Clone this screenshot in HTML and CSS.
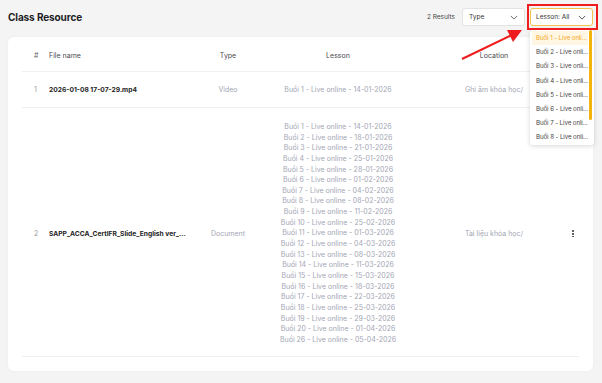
FILE: index.html
```html
<!DOCTYPE html>
<html>
<head>
<meta charset="utf-8">
<link rel="stylesheet" href="styles.css">
</head>
<body>
<div class="page">
  <div class="topbar">
    <h1 class="title">Class Resource</h1>
    <div class="controls">
      <span class="results">2 Results</span>
      <div class="select">
        <span>Type</span>
        <svg class="chev" viewBox="0 0 10 6" width="8" height="5"><path d="M1 1l4 4 4-4" fill="none" stroke="#666" stroke-width="1.2"/></svg>
      </div>
      <div class="select select-active">
        <span>Lesson: All</span>
        <svg class="chev" viewBox="0 0 10 6" width="8" height="5"><path d="M1 1l4 4 4-4" fill="none" stroke="#555" stroke-width="1.2"/></svg>
        <div class="menu">
          <div class="menu-item active">Buổi 1 - Live onli...</div>
          <div class="menu-item">Buổi 2 - Live onli...</div>
          <div class="menu-item">Buổi 3 - Live onli...</div>
          <div class="menu-item">Buổi 4 - Live onli...</div>
          <div class="menu-item">Buổi 5 - Live onli...</div>
          <div class="menu-item">Buổi 6 - Live onli...</div>
          <div class="menu-item">Buổi 7 - Live onli...</div>
          <div class="menu-item">Buổi 8 - Live onli...</div>
          <div class="scrollbar"></div>
        </div>
      </div>
    </div>
  </div>

  <div class="card">
    <div class="row head">
      <div class="c-num">#</div>
      <div class="c-name">File name</div>
      <div class="c-type">Type</div>
      <div class="c-lesson">Lesson</div>
      <div class="c-loc">Location</div>
      <div class="c-act"></div>
    </div>
    <div class="row">
      <div class="c-num">1</div>
      <div class="c-name">2026-01-08 17-07-29.mp4</div>
      <div class="c-type muted">Video</div>
      <div class="c-lesson muted">Buổi 1 - Live online - 14-01-2026</div>
      <div class="c-loc muted">Ghi âm khóa học/</div>
      <div class="c-act"></div>
    </div>
    <div class="row tall">
      <div class="c-num">2</div>
      <div class="c-name">SAPP_ACCA_CertIFR_Slide_English ver_...</div>
      <div class="c-type muted">Document</div>
      <div class="c-lesson muted lessons">
        <div>Buổi 1 - Live online - 14-01-2026</div>
        <div>Buổi 2 - Live online - 18-01-2026</div>
        <div>Buổi 3 - Live online - 21-01-2026</div>
        <div>Buổi 4 - Live online - 25-01-2026</div>
        <div>Buổi 5 - Live online - 28-01-2026</div>
        <div>Buổi 6 - Live online - 01-02-2026</div>
        <div>Buổi 7 - Live online - 04-02-2026</div>
        <div>Buổi 8 - Live online - 08-02-2026</div>
        <div>Buổi 9 - Live online - 11-02-2026</div>
        <div>Buổi 10 - Live online - 25-02-2026</div>
        <div>Buổi 11 - Live online - 01-03-2026</div>
        <div>Buổi 12 - Live online - 04-03-2026</div>
        <div>Buổi 13 - Live online - 08-03-2026</div>
        <div>Buổi 14 - Live online - 11-03-2026</div>
        <div>Buổi 15 - Live online - 15-03-2026</div>
        <div>Buổi 16 - Live online - 18-03-2026</div>
        <div>Buổi 17 - Live online - 22-03-2026</div>
        <div>Buổi 18 - Live online - 25-03-2026</div>
        <div>Buổi 19 - Live online - 29-03-2026</div>
        <div>Buổi 20 - Live online - 01-04-2026</div>
        <div>Buổi 26 - Live online - 05-04-2026</div>
      </div>
      <div class="c-loc muted">Tài liệu khóa học/</div>
      <div class="c-act"><span class="kebab"><i></i><i></i><i></i></span></div>
    </div>
  </div>

  <div class="annot-box"></div>
  <svg class="annot-arrow" width="602" height="383" viewBox="0 0 602 383">
    <line x1="462" y1="59" x2="512" y2="35" stroke="#ee1c1c" stroke-width="2"/>
    <polygon points="522,30 507,30 513,42" fill="#ee1c1c"/>
  </svg>
</div>
</body>
</html>
```

FILE: styles.css
```css
* { box-sizing: border-box; }
html, body { margin: 0; padding: 0; }
body {
  background: #f4f4f5;
  font-family: "Inter", "Roboto", sans-serif;
  color: #222;
  width: 602px;
  height: 383px;
  overflow: hidden;
}
.page {
  position: relative;
  padding: 7px 9px 0 8px;
}
.topbar {
  display: flex;
  align-items: center;
  justify-content: space-between;
  height: 20px;
  margin-bottom: 10px;
}
.title {
  margin: 0;
  font-size: 10px;
  font-weight: 700;
  color: #1d1d1f;
  letter-spacing: -0.1px;
}
.controls {
  display: flex;
  align-items: center;
}
.results {
  font-size: 6.5px;
  color: #444;
  margin-right: 7px;
}
.select {
  position: relative;
  width: 63px;
  height: 18px;
  background: #fff;
  border: 1px solid #e3e3e6;
  border-radius: 3px;
  display: flex;
  align-items: center;
  justify-content: space-between;
  padding: 0 6px 0 6px;
  font-size: 6.5px;
  color: #333;
}
.select-active {
  margin-left: 5px;
  border-color: #f3c24d;
  padding-left: 5px;
}
.chev { display: block; }
.menu {
  position: absolute;
  top: 21px;
  left: -1px;
  width: 64px;
  height: 115px;
  background: #fff;
  border-radius: 3px;
  box-shadow: 0 1px 5px rgba(0,0,0,0.16);
  padding: 1px 6px 0 2px;
  z-index: 5;
}
.menu-item {
  height: 14.2px;
  line-height: 14.2px;
  font-size: 6.2px;
  color: #444;
  padding-left: 4px;
  white-space: nowrap;
  letter-spacing: -0.1px;
}
.menu-item.active {
  color: #f5a623;
  background: #fff7e4;
}
.scrollbar {
  position: absolute;
  right: 2px;
  top: 0;
  width: 3px;
  height: 90px;
  background: #f5b40c;
  border-radius: 2px;
}
.card {
  background: #fff;
  border-radius: 6px;
  padding: 0 14px 14px 14px;
  box-shadow: 0 0 3px rgba(0,0,0,0.04);
  height: 334px;
}
.row {
  display: grid;
  grid-template-columns: 27px 141px 76px 144px 152px 16px;
  align-items: center;
  border-bottom: 1px solid #efeff1;
  height: 36px;
  font-size: 7px;
}
.row.head {
  height: 35px;
  padding-top: 3px;
  color: #4a4a4f;
  font-size: 7px;
}
.row.tall {
  height: 249px;
  padding: 14px 0 11px;
}
.c-num { padding-left: 12px; color: #999; }
.head .c-num { color: #666; }
.c-name { font-weight: 700; font-size: 6.7px; color: #222; white-space: nowrap; overflow: hidden; }
.head .c-name { font-weight: 400; font-size: 7px; color: #4a4a4f; }
.c-type, .c-lesson { text-align: center; }
.c-loc { text-align: center; padding-left: 16px; }
.muted { color: #a3a6b4; }
.lessons div { height: 10.65px; line-height: 10.65px; white-space: nowrap; }
.c-act { display: flex; justify-content: flex-end; padding-right: 4px; }
.kebab { display: flex; flex-direction: column; gap: 1.2px; }
.kebab i { display: block; width: 1.6px; height: 1.6px; border-radius: 50%; background: #444; }
.annot-box {
  position: absolute;
  left: 527px;
  top: 4px;
  width: 71px;
  height: 26px;
  border: 2px solid #ee1c1c;
  z-index: 6;
}
.annot-arrow {
  position: absolute;
  left: 0;
  top: 0;
  z-index: 6;
  pointer-events: none;
}
```
